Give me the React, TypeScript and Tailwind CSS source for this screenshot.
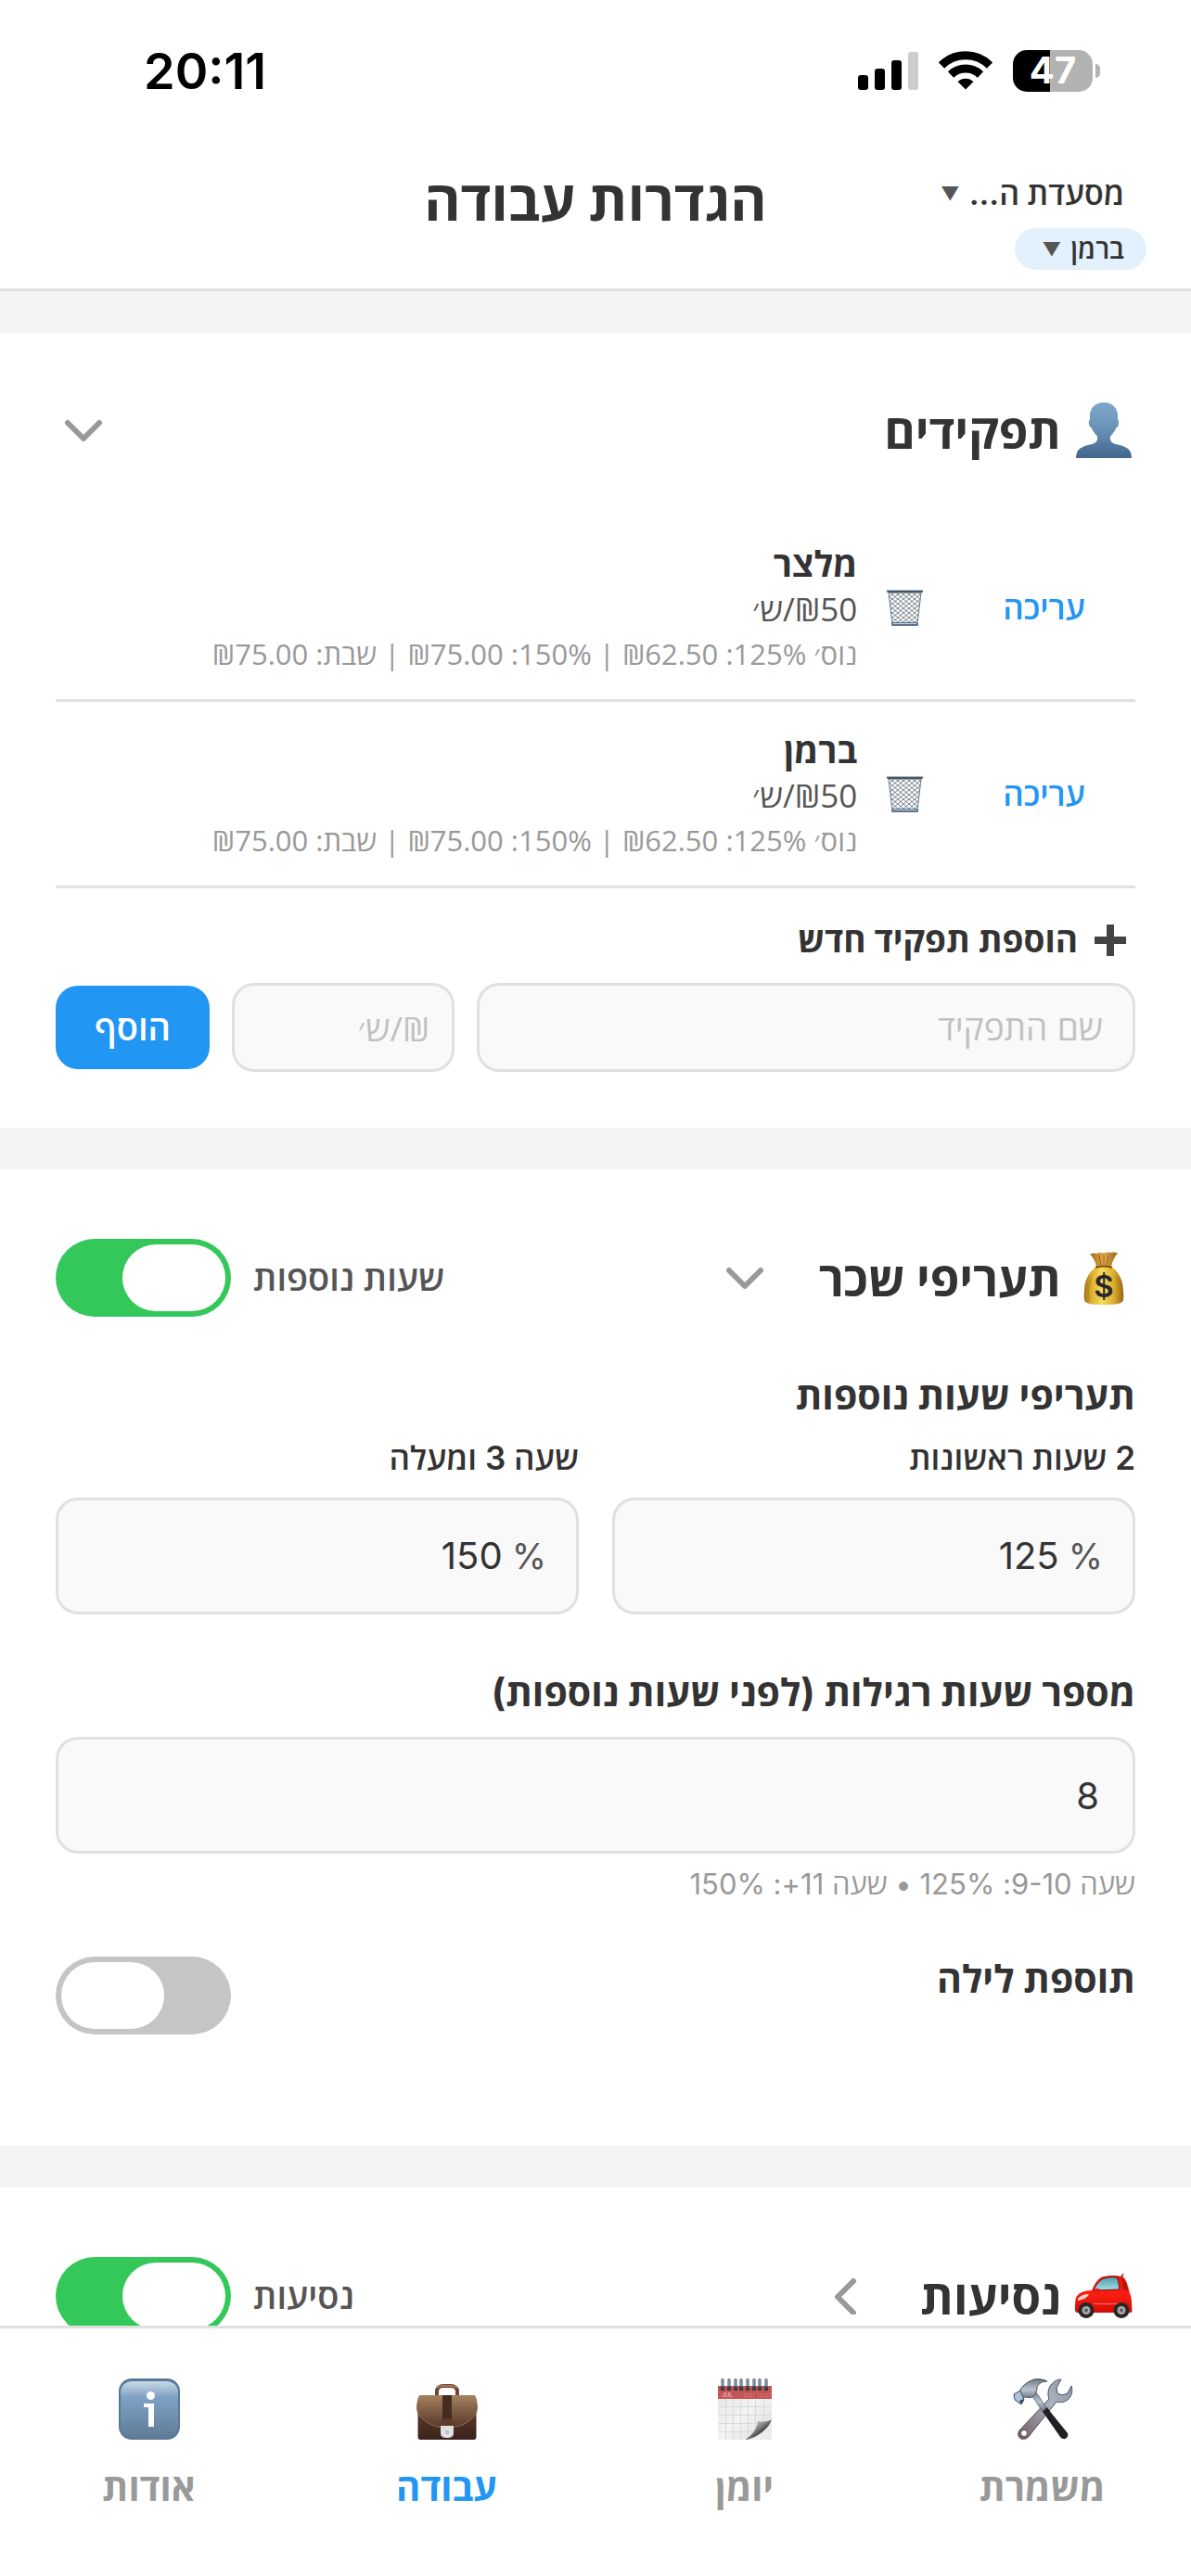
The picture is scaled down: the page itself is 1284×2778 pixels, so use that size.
import { useState } from "react";
import type { ReactNode } from "react";

interface RoleProps {
  id: number;
  name: string;
  rate: string;
  details: string;
}

const roles: RoleProps[] = [
  {
    id: 1,
    name: "מלצר",
    rate: "₪50/ש׳",
    details: "נוס׳ 125%: ₪62.50 | 150%: ₪75.00 | שבת: ₪75.00",
  },
  {
    id: 2,
    name: "ברמן",
    rate: "₪50/ש׳",
    details: "נוס׳ 125%: ₪62.50 | 150%: ₪75.00 | שבת: ₪75.00",
  },
];

/* ---------- Icons ---------- */

const SignalIcon = () => (
  <svg width="65" height="41" viewBox="0 0 65 41" aria-hidden="true">
    <rect x="0" y="25" width="11" height="16" rx="3" />
    <rect x="18" y="18" width="11" height="23" rx="3" />
    <rect x="36" y="9" width="11" height="32" rx="3" />
    <rect x="54" y="0" width="11" height="41" rx="3" fill="#cccccc" />
  </svg>
);

const WifiIcon = () => (
  <svg width="58" height="42" viewBox="0 0 58 42" aria-hidden="true">
    <g fill="none" stroke="#000" strokeWidth="9">
      <path d="M3 15.5a37 37 0 0 1 52 0" />
      <path d="M13 25.5a23 23 0 0 1 32 0" />
    </g>
    <path d="M20.5 33a12.5 12.5 0 0 1 17 0L29 41.5z" />
  </svg>
);

const Chevron = ({ open }: { open: boolean }) => (
  <svg width="40" height="40" viewBox="0 0 40 40" fill="none" stroke="#999" strokeWidth="6" strokeLinecap="round" strokeLinejoin="round" aria-hidden="true">
    {open ? <path d="M3 12l17 17 17-17" /> : <path d="M28 4L11 21l17 17" />}
  </svg>
);

const PersonIcon = () => (
  <svg width="60" height="60" viewBox="0 0 60 60" aria-hidden="true">
    <defs>
      <linearGradient id="person" x1="0" y1="0" x2="0" y2="1">
        <stop offset="0" stopColor="#7fa8cb" />
        <stop offset="0.5" stopColor="#6690b5" />
        <stop offset="1" stopColor="#44658b" />
      </linearGradient>
    </defs>
    <path
      d="M30 0c9 0 15 6 15 14v5c1.500 0 1.500 3 .5 6-.6 2-1.500 2-2 2-1.500 4-4 7-6.500 9.500-.5 5 1 7 6 8.500 9 2 14 4 16 9 .6 2 1 4 1 6H0c0-2 .4-4 1-6 2-5 7-7 16-9 5-1.500 6.500-3.500 6-8.500-2.500-2.500-5-5.500-6.500-9.500-.5 0-1.400 0-2-2-1-3-1-6 .5-6v-5C15 6 21 0 30 0z"
      fill="url(#person)"
    />
  </svg>
);

const TrashIcon = () => (
  <svg width="39" height="39" viewBox="0 0 39 39" aria-hidden="true">
    <defs>
      <pattern id="mesh" width="6" height="5" patternUnits="userSpaceOnUse">
        <path d="M0 0l6 5M6 0L0 5" stroke="#59636f" strokeWidth="0.8" />
      </pattern>
    </defs>
    <path d="M2 3h35l-4 34H6z" fill="#fbfcfd" />
    <path d="M2 3h35l-4 34H6z" fill="url(#mesh)" stroke="#69788c" strokeWidth="1" />
    <rect x="0" y="0" width="39" height="3" rx="1.500" fill="#4f5459" />
    <rect x="1" y="0" width="37" height="1" fill="#9bb7d3" />
    <rect x="5" y="35" width="29" height="4" rx="1.500" fill="#5f7287" />
    <rect x="7" y="36" width="25" height="1" fill="#b9d0e6" />
  </svg>
);

const PlusIcon = () => (
  <svg width="34" height="34" viewBox="0 0 34 34" aria-hidden="true">
    <path d="M13 0h8v13h13v8H21v13h-8V21H0v-8h13z" fill="#444" />
  </svg>
);

const MoneyIcon = () => (
  <svg width="44" height="57" viewBox="0 0 44 57" aria-hidden="true">
    <defs>
      <linearGradient id="bag" x1="0" y1="0" x2="1" y2="0">
        <stop offset="0" stopColor="#9c6d14" />
        <stop offset="0.2" stopColor="#dcb22f" />
        <stop offset="0.45" stopColor="#f4dc5c" />
        <stop offset="0.75" stopColor="#dcae2d" />
        <stop offset="1" stopColor="#976415" />
      </linearGradient>
      <linearGradient id="neck" x1="0" y1="0" x2="1" y2="0">
        <stop offset="0" stopColor="#a2671b" />
        <stop offset="0.5" stopColor="#e0a94a" />
        <stop offset="1" stopColor="#9a5f16" />
      </linearGradient>
    </defs>
    <path d="M14 16C4 23 1 33 1 43c-.5 3-.5 6 0 9 1 4 7 5 21 5s20-1 21-5c.5-3 .5-6 0-9 0-10-3-20-13-27z" fill="url(#bag)" />
    <path d="M7 2c3 0 4-1 7 0 3-2 5-1 8-1s5-1 8 0c2-1 4 0 7 0-3 4-6 9-7 15H14C13 10 10 6 7 2z" fill="url(#neck)" />
    <path d="M17 4l2 10M27 4l-2 10M22 3v11" stroke="#9c641c" strokeWidth="1" />
    <path d="M13 17c5-2 13-2 18 0" stroke="#7d4a12" strokeWidth="2" fill="none" />
    <path d="M9 27c-4 8-4 16-3 25M35 27c4 8 4 16 3 25" stroke="#b98420" strokeWidth="1" fill="none" />
    <text x="22" y="49" textAnchor="middle" fontSize="33" fontWeight="600" fill="#2b2530" fontFamily="Inter, sans-serif">
      $
    </text>
  </svg>
);

const CarIcon = () => (
  <svg width="62" height="48" viewBox="0 0 62 48" aria-hidden="true">
    <defs>
      <linearGradient id="car" x1="0" y1="0" x2="0" y2="1">
        <stop offset="0" stopColor="#d8160c" />
        <stop offset="0.5" stopColor="#fb1d12" />
        <stop offset="1" stopColor="#d40c06" />
      </linearGradient>
      <linearGradient id="glass" x1="0" y1="0" x2="0" y2="1">
        <stop offset="0" stopColor="#4f9db0" />
        <stop offset="1" stopColor="#a5dce6" />
      </linearGradient>
    </defs>
    <path d="M52 0l-3 5" stroke="#444" strokeWidth="1.500" />
    <path
      d="M18 18C22 9 26 4 31 3c6-1.500 14-1.500 20 0 4 2 6 9 8 18 1.500 3 2 7 2 11l.5 8c0 1-1 2-2 2H3c-2 0-3-1-3-3v-5c.5-3 0-5 1-8 2-5 8-8 17-8z"
      fill="url(#car)"
    />
    <path d="M20 18c3-7 7-12 13-13.500 4-.8 8-1 12-.5 2 4 2.500 9 2.500 13z" fill="url(#glass)" stroke="#7d1510" strokeWidth="1" />
    <path d="M51 5c3 4 5 9 6 14l-5-3c0-4 0-8-1-11z" fill="#a31510" />
    <path d="M3 27c3-4 8-5 12-5-2 4-7 6-12 7z" fill="#f8d4cf" />
    <path d="M20 32c8 1 18 1 28 0" stroke="#ff7b70" strokeWidth="1" fill="none" />
    <rect x="21" y="16" width="6" height="5" rx="2" fill="#e01a10" />
    <circle cx="12" cy="39.500" r="8.500" fill="#2a2626" />
    <circle cx="50" cy="39.500" r="8.500" fill="#2a2626" />
    <circle cx="12" cy="39.500" r="4.500" fill="#a9aaab" />
    <circle cx="50" cy="39.500" r="4.500" fill="#a9aaab" />
    <circle cx="12" cy="39.500" r="2" fill="#5d5d5f" />
    <circle cx="50" cy="39.500" r="2" fill="#5d5d5f" />
  </svg>
);

const ToolsIcon = () => (
  <svg width="66" height="66" viewBox="0 0 66 66" aria-hidden="true">
    <defs>
      <linearGradient id="steel" x1="1" y1="0" x2="0" y2="1">
        <stop offset="0" stopColor="#8b97a5" />
        <stop offset="0.4" stopColor="#aab2bd" />
        <stop offset="0.7" stopColor="#8f8791" />
        <stop offset="1" stopColor="#6d5860" />
      </linearGradient>
      <linearGradient id="head" x1="0" y1="0" x2="0" y2="1">
        <stop offset="0" stopColor="#6c7884" />
        <stop offset="0.5" stopColor="#b9c4d0" />
        <stop offset="1" stopColor="#65707c" />
      </linearGradient>
    </defs>
    <path
      d="M53 1l-5 9 1 6 5 2 6-2 4-8c2 6 0 12-4 15-4 3-9 3-12 2L20 60c-3 5-7 6-10 5-4-2-4-6-2-9l32-34c-2-5-1-11 2-15 3-4 7-6 11-6z"
      fill="url(#steel)"
      stroke="#4b5058"
      strokeWidth="1"
    />
    <circle cx="13" cy="59" r="3.500" fill="#fff" stroke="#5b4d54" strokeWidth="1" />
    <path d="M20 17l5-3 4 5 8 13-4 4-9-14z" fill="url(#head)" stroke="#565e67" strokeWidth="0.800" />
    <path d="M33 36l5-5c1 2 3 4 5 7l17 21c1 3-1 7-5 6-1 0-2-1-3-2L36 40z" fill="#1f2122" />
    <path d="M8 15c2-7 9-12 16-14 5-1 10 0 14 2-5 0-9 2-11 6 0 4-1 8-5 11-3 1-6 0-9 0l-2 3z" fill="url(#head)" stroke="#434b54" strokeWidth="1" />
    <path d="M2 17l7-4 4 10-3 5-7-5z" fill="#a6c4dc" stroke="#444c55" strokeWidth="1" />
    <path d="M8 24l5-2-3 6z" fill="#3c4147" />
  </svg>
);

const CalendarIcon = () => (
  <svg width="60" height="66" viewBox="0 0 60 66" aria-hidden="true">
    <defs>
      <linearGradient id="sheet" x1="0" y1="0" x2="1" y2="1">
        <stop offset="0" stopColor="#e4e4e4" />
        <stop offset="0.5" stopColor="#f4f4f4" />
        <stop offset="1" stopColor="#dcdcdc" />
      </linearGradient>
      <linearGradient id="curl" x1="0" y1="0" x2="1" y2="1">
        <stop offset="0" stopColor="#fafafa" />
        <stop offset="0.45" stopColor="#8b8b8b" />
        <stop offset="0.6" stopColor="#4d4d4d" />
        <stop offset="1" stopColor="#e6e6e6" />
      </linearGradient>
    </defs>
    <rect x="1" y="9" width="58" height="57" fill="url(#sheet)" />
    <path d="M1 30.500h58M1 39.500h58M1 48.500h58M1 57.500h58M9.500 22v44M17.500 22v44M25.500 22v44M33.500 22v44M41.500 22v44M50.500 22v44" stroke="#d9d9d9" strokeWidth="1" />
    <path d="M59 44c-4 8-14 19-29 22h29z" fill="#ececec" />
    <path d="M59 44c-5 3-10 3-15 2-1 8-6 16-14 20 14-2 26-12 29-22z" fill="url(#curl)" />
    <rect x="1" y="8" width="58" height="14" fill="#c25555" />
    <text x="11" y="20" textAnchor="middle" fontSize="6" fill="#f2dcdc" fontFamily="Inter, sans-serif">
      JUL
    </text>
    <path d="M29 17h12M29 19.500h12M44 17h13M44 19.500h13" stroke="#d98484" strokeWidth="1" strokeDasharray="1 1" />
    {[6, 13, 20, 26, 33, 40, 46, 53].map((x) => (
      <g key={x}>
        <circle cx={x} cy="11" r="2.300" fill="#3c3236" />
        <rect x={x - 1.5} y="0" width="3" height="11" rx="1.500" fill="#3d4d5e" />
        <rect x={x - 0.5} y="1" width="1" height="7" fill="#bcd2e4" />
      </g>
    ))}
  </svg>
);

const BriefcaseIcon = () => (
  <svg width="66" height="66" viewBox="0 0 66 66" aria-hidden="true">
    <defs>
      <linearGradient id="flap" x1="0" y1="0" x2="0" y2="1">
        <stop offset="0" stopColor="#a5825f" />
        <stop offset="0.5" stopColor="#7c5a43" />
        <stop offset="1" stopColor="#553527" />
      </linearGradient>
      <linearGradient id="base" x1="0" y1="0" x2="0" y2="1">
        <stop offset="0" stopColor="#6a4634" />
        <stop offset="1" stopColor="#3a221b" />
      </linearGradient>
    </defs>
    <path d="M22 18v-4c0-4 3-6 7-6h8c4 0 7 2 7 6v4" fill="none" stroke="#6b4632" strokeWidth="4" />
    <path d="M22 10c3-3 19-3 22 0" fill="none" stroke="#a57856" strokeWidth="2" />
    <rect x="1.500" y="20" width="63" height="46" rx="3" fill="url(#base)" />
    <path d="M3 18h60c2 4 3 9 3 14-1 11-15 22-33 22S1 43 0 32c0-5 1-10 3-14z" fill="url(#flap)" />
    <path d="M1 36c4 9 16 17 32 17s28-8 32-17" fill="none" stroke="#8c674e" strokeWidth="1" />
    <rect x="28" y="18" width="10" height="30" fill="#452c20" />
    <path d="M26 52v-3c0-4 3-6 7-6s7 2 7 6v3z" fill="#5d3a2a" />
    <path d="M26 51h14v8c0 4-3 5-7 5s-7-1-7-5z" fill="#dedede" />
    <circle cx="33" cy="58" r="3.500" fill="#c2c5c7" stroke="#fff" strokeWidth="1" />
  </svg>
);

const InfoIcon = () => (
  <svg width="66" height="66" viewBox="0 0 66 66" aria-hidden="true">
    <defs>
      <linearGradient id="info" x1="0" y1="0" x2="0" y2="1">
        <stop offset="0" stopColor="#c9d9e6" />
        <stop offset="0.28" stopColor="#7fa1c4" />
        <stop offset="0.6" stopColor="#7192b0" />
        <stop offset="1" stopColor="#5f7a95" />
      </linearGradient>
    </defs>
    <rect width="66" height="66" rx="14" fill="#587899" />
    <rect x="2" y="3" width="62" height="61" rx="12" fill="url(#info)" />
    <circle cx="34.500" cy="18.500" r="4.500" fill="#fff" />
    <path d="M27 27h11v25h-6V31h-5z" fill="#fff" />
  </svg>
);

/* ---------- Shared parts ---------- */

interface SwitchProps {
  id: string;
  checked: boolean;
  onChange: (value: boolean) => void;
}

const Switch = ({ id, checked, onChange }: SwitchProps) => (
  <input
    id={id}
    type="checkbox"
    role="switch"
    dir="ltr"
    checked={checked}
    onChange={(e) => onChange(e.target.checked)}
    className="h-[84px] w-[189px] shrink-0 appearance-none rounded-full bg-[#c5c5c7] p-1.5 before:block before:h-[72px] before:w-[111px] before:rounded-full before:bg-white checked:bg-[#34c85a] checked:before:ml-auto"
  />
);

const SectionTitle = ({ icon, children }: { icon: ReactNode; children: ReactNode }) => (
  <div className="flex items-center gap-3">
    <span className="flex w-[68px] justify-center">{icon}</span>
    <h2 className="pt-1 text-[51px] font-bold leading-[66px]">{children}</h2>
  </div>
);

const RoleRow = ({ name, rate, details }: RoleProps) => (
  <li className="flex items-center border-b-[3px] border-[#e0e0e0] py-6">
    <button className="px-[54px] text-[35px] font-semibold leading-[48px] text-[#2196f3]">עריכה</button>
    <button className="px-8" aria-label={`מחיקת ${name}`}>
      <TrashIcon />
    </button>
    <div className="pt-0.5">
      <h3 className="text-[38px] font-bold leading-[52px]">{name}</h3>
      <p className="font-['Open_Sans'] text-[35px] leading-[46px] text-[#555]">{rate}</p>
      <p className="font-['Open_Sans'] text-[31px] leading-[50px] text-[#999]">{details}</p>
    </div>
  </li>
);

const PercentField = ({ id, label, value }: { id: string; label: string; value: string }) => (
  <div>
    <label htmlFor={id} className="block text-[35px] font-semibold leading-[50px]">
      {label}
    </label>
    <div className="mt-[18px] flex h-[126px] items-center gap-2.5 rounded-3xl border-[3px] border-[#e0e0e0] bg-[#f9f9f9] px-8">
      <span className="text-[38px] text-[#555]">%</span>
      <input id={id} defaultValue={value} inputMode="numeric" className="w-full min-w-0 bg-transparent text-right text-[40px] outline-none" />
    </div>
  </div>
);

const tabs = [
  { label: "משמרת", icon: <ToolsIcon /> },
  { label: "יומן", icon: <CalendarIcon /> },
  { label: "עבודה", icon: <BriefcaseIcon />, active: true },
  { label: "אודות", icon: <InfoIcon /> },
];

const App = () => {
  const [overtime, setOvertime] = useState(true);
  const [night, setNight] = useState(false);
  const [travel, setTravel] = useState(true);

  return (
    <div dir="rtl" className="flex h-screen flex-col overflow-hidden bg-white font-[Inter,'Open_Sans'] text-[#333]">
      {/* Status bar */}
      <div dir="ltr" className="flex h-[152px] shrink-0 items-center justify-between pl-[155px] pr-[98px] text-black">
        <span className="text-[54px] font-semibold">20:11</span>
        <div className="flex items-center gap-[22px]">
          <SignalIcon />
          <WifiIcon />
          <div className="flex items-center gap-[3px]">
            <span className="flex h-[45px] w-[86px] items-center justify-center rounded-[15px] bg-linear-to-r from-black from-47% to-[#b2b2b2] to-47% text-[40px] font-bold text-white">
              47
            </span>
            <span className="h-[15px] w-[5px] rounded-r-full bg-[#b2b2b2]" />
          </div>
        </div>
      </div>

      {/* Header */}
      <header className="grid shrink-0 grid-cols-3 border-b-[3px] border-[#e0e0e0] px-12 pb-5 pt-8">
        <div className="flex flex-col items-start gap-3">
          <button className="flex items-center gap-2.5 px-6 text-[34px] font-semibold leading-[50px]" aria-haspopup="menu">
            מסעדת ה...
            <span className="text-[20px] text-[#555]">▼</span>
          </button>
          <button className="flex h-[45px] items-center gap-2.5 rounded-full bg-[#e3f1fd] pl-[30px] pr-6 text-[29px] font-semibold" aria-haspopup="menu">
            ברמן
            <span className="text-[20px] text-[#555]">▼</span>
          </button>
        </div>
        <h1 className="whitespace-nowrap text-center text-[60px] font-bold leading-[64px]">הגדרות עבודה</h1>
      </header>

      <main className="flex min-h-0 grow flex-col gap-[45px] overflow-hidden bg-[#f4f4f4] pt-[45px]">
        {/* Roles */}
        <section className="shrink-0 bg-white p-[60px]">
          <div className="flex h-[89px] items-center justify-between">
            <SectionTitle icon={<PersonIcon />}>תפקידים</SectionTitle>
            <button className="px-2.5" aria-label="תפקידים" aria-expanded="true">
              <Chevron open />
            </button>
          </div>
          <ul className="mt-12">
            {roles.map((role) => (
              <RoleRow key={role.id} {...role} />
            ))}
          </ul>
          <h3 className="mt-[26px] flex items-center gap-[18px] pr-2.5 text-[37px] font-bold leading-[60px]">
            <PlusIcon />
            הוספת תפקיד חדש
          </h3>
          <form className="mt-4 flex items-center gap-6" onSubmit={(e) => e.preventDefault()}>
            <input
              aria-label="שם התפקיד"
              placeholder="שם התפקיד"
              className="h-24 min-w-0 grow rounded-3xl border-[3px] border-[#e0e0e0] bg-[#f9f9f9] px-8 text-[37px] placeholder:text-[#c0c0c0]"
            />
            <input
              aria-label="₪/ש׳"
              placeholder="₪/ש׳"
              className="h-24 w-[240px] rounded-3xl border-[3px] border-[#e0e0e0] bg-[#f9f9f9] px-6 font-['Open_Sans'] text-[37px] placeholder:text-[#c0c0c0]"
            />
            <button className="h-[90px] w-[166px] rounded-3xl bg-[#2196f3] text-[38px] font-semibold text-white">הוסף</button>
          </form>
        </section>

        {/* Wage rates */}
        <section className="shrink-0 bg-white px-[60px] pb-[120px] pt-[60px]">
          <div className="flex h-[114px] items-center justify-between">
            <div className="flex items-center gap-[60px]">
              <SectionTitle icon={<MoneyIcon />}>תעריפי שכר</SectionTitle>
              <button aria-label="תעריפי שכר" aria-expanded="true">
                <Chevron open />
              </button>
            </div>
            <div className="flex items-center gap-6">
              <label htmlFor="overtime" className="text-[38px] font-semibold text-[#555]">
                שעות נוספות
              </label>
              <Switch id="overtime" checked={overtime} onChange={setOvertime} />
            </div>
          </div>

          <h3 className="mt-10 text-[41px] font-bold leading-[60px]">תעריפי שעות נוספות</h3>
          <div className="mt-3 grid grid-cols-2 gap-9">
            <PercentField id="first-hours" label="2 שעות ראשונות" value="125" />
            <PercentField id="next-hours" label="שעה 3 ומעלה" value="150" />
          </div>

          <label htmlFor="regular-hours" className="mt-[54px] block text-[41px] font-bold leading-[60px]">
            מספר שעות רגילות (לפני שעות נוספות)
          </label>
          <input
            id="regular-hours"
            defaultValue="8"
            inputMode="numeric"
            className="mt-[18px] block h-[126px] w-full rounded-3xl border-[3px] border-[#e0e0e0] bg-[#f9f9f9] px-9 text-[40px]"
          />
          <p className="mt-2 text-[31px] leading-[50px] text-[#999]">שעה 9-10: 125% • שעה 11+: 150%</p>

          <div className="mt-[53px] flex items-start justify-between">
            <label htmlFor="night" className="text-[41px] font-bold leading-[48px]">
              תוספת לילה
            </label>
            <Switch id="night" checked={night} onChange={setNight} />
          </div>
        </section>

        {/* Travel */}
        <section className="shrink-0 bg-white p-[60px]">
          <div className="flex h-[114px] items-center justify-between">
            <div className="flex items-center gap-[60px]">
              <SectionTitle icon={<CarIcon />}>נסיעות</SectionTitle>
              <button aria-label="נסיעות" aria-expanded="false">
                <Chevron open={false} />
              </button>
            </div>
            <div className="flex items-center gap-6">
              <label htmlFor="travel" className="text-[38px] font-semibold text-[#555]">
                נסיעות
              </label>
              <Switch id="travel" checked={travel} onChange={setTravel} />
            </div>
          </div>
        </section>
      </main>

      {/* Tab bar */}
      <nav className="grid shrink-0 grid-cols-4 border-t-[3px] border-[#e0e0e0] bg-white pb-[65px] pt-[54px]">
        {tabs.map((tab) => (
          <button key={tab.label} className="flex flex-col items-center gap-[22px]" aria-current={tab.active ? "page" : undefined}>
            {tab.icon}
            <span className={`text-[40px] font-bold leading-[60px] ${tab.active ? "text-[#2196f3]" : "text-[#999]"}`}>{tab.label}</span>
          </button>
        ))}
      </nav>
    </div>
  );
};

export default App;
